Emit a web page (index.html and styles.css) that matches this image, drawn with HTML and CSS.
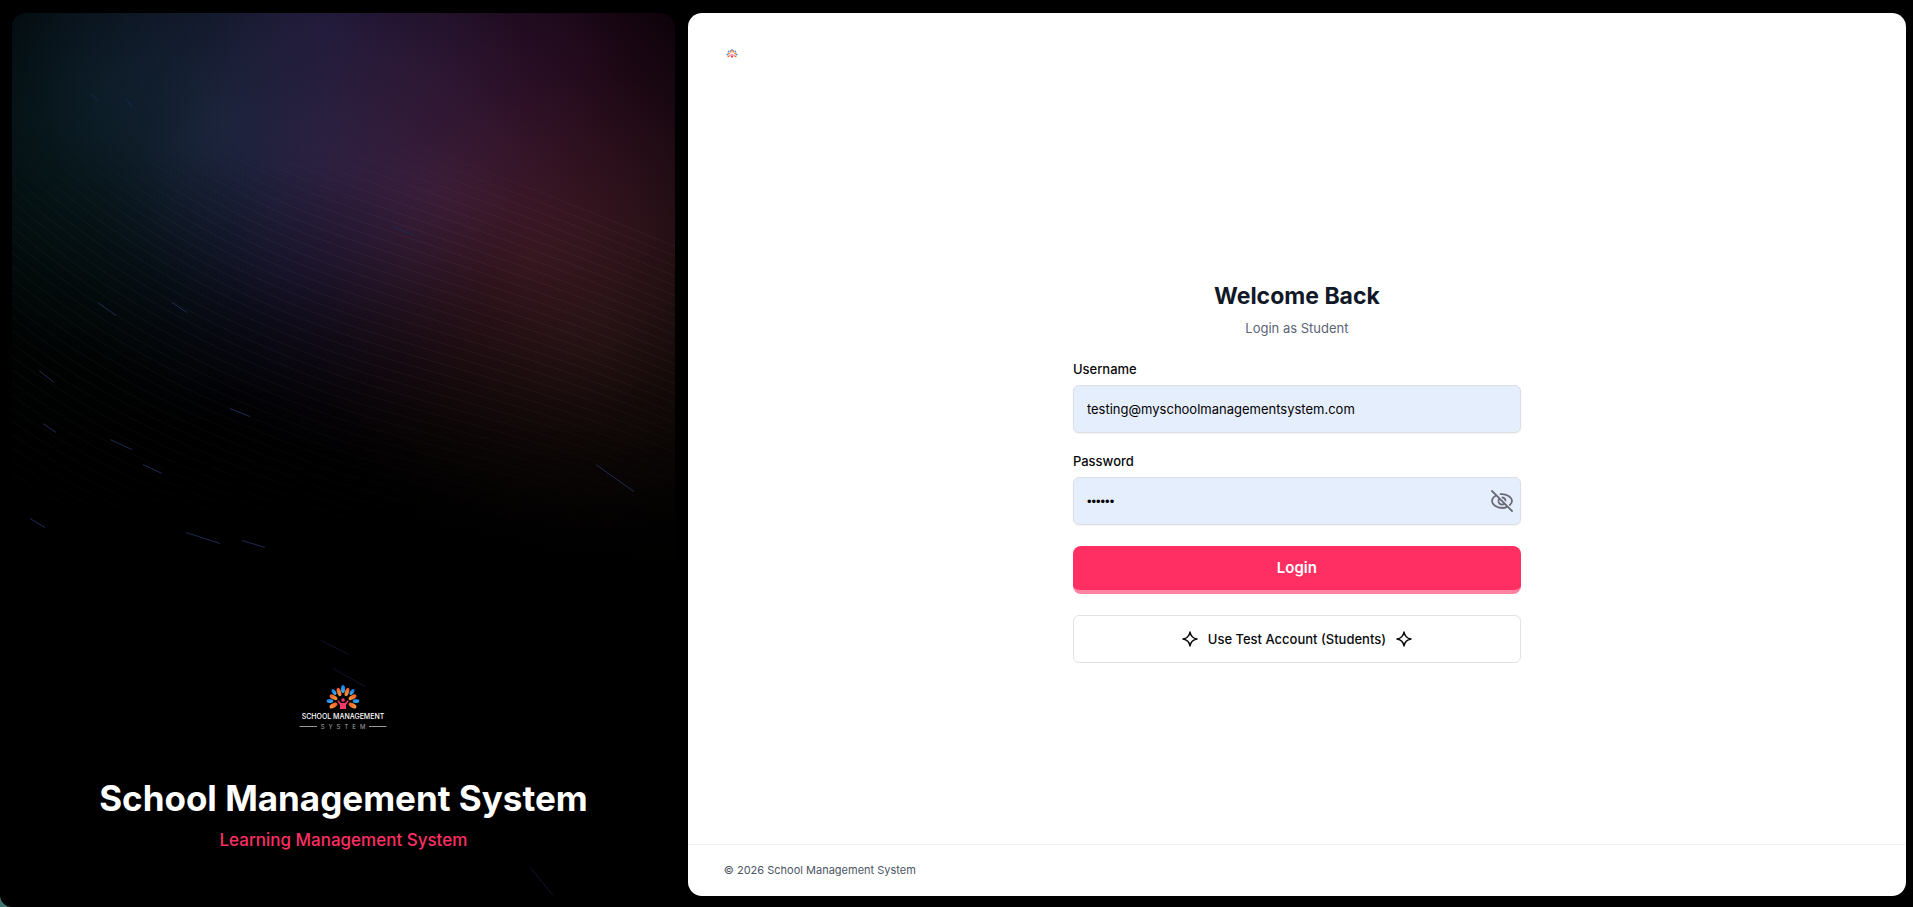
FILE: index.html
```html
<!DOCTYPE html>
<html lang="en">

<head>
    <meta charset="utf-8">
    <meta name="viewport" content="width=device-width, initial-scale=1">
    <title>School Management System</title>
    <link rel="stylesheet" href="styles.css">
</head>

<body>
    <div class="page">
        <aside class="hero">
            <svg class="hero-lines" viewBox="0 0 663 884" preserveAspectRatio="xMidYMid slice" aria-hidden="true">
                <defs>
                    <linearGradient id="fade" x1="0" y1="0" x2="0" y2="1">
                        <stop offset="0.12" stop-color="#000" />
                        <stop offset="0.24" stop-color="#fff" />
                        <stop offset="0.4" stop-color="#fff" />
                        <stop offset="0.62" stop-color="#000" />
                    </linearGradient>
                    <mask id="lines-mask" maskUnits="userSpaceOnUse" x="0" y="0" width="663" height="884">
                        <rect width="663" height="884" fill="url(#fade)" />
                    </mask>
                </defs>
                <g mask="url(#lines-mask)">
                    <g id="waves" class="waves"></g>
                </g>
                <g class="comets">
                    <path d="M80 82l7 7M114 87l7 8M381 214l22 9M86 290l18 13M160 290l15 10M27 358l15 12M218 396l20 8M31 411l13 9M98 427l22 10M131 452l19 9M584 452l38 27M18 506l15 9M174 520l34 11M230 528l23 7" />
                    <path class="dim" d="M309 628l28 14M321 656l32 18M519 856l22 27" />
                </g>
            </svg>
            <div class="brand">
                <svg class="brand-logo" viewBox="0 0 88 46" role="img" aria-label="School Management System">
                    <defs>
                        <linearGradient id="orange" x1="0" y1="0" x2="0" y2="1">
                            <stop offset="0" stop-color="#f15a29" />
                            <stop offset="1" stop-color="#fb9a3c" />
                        </linearGradient>
                        <linearGradient id="blue" x1="0" y1="0" x2="0" y2="1">
                            <stop offset="0" stop-color="#1479e8" />
                            <stop offset="1" stop-color="#45b4f5" />
                        </linearGradient>
                        <g id="tree">
                            <g fill="url(#blue)">
                                <ellipse cx="44" cy="4" rx="2" ry="4" />
                                <ellipse cx="35" cy="7" rx="1.800" ry="3.300" transform="rotate(-35 35 7)" />
                                <ellipse cx="53" cy="7" rx="1.800" ry="3.300" transform="rotate(35 53 7)" />
                                <ellipse cx="31" cy="16" rx="3.300" ry="1.900" />
                                <ellipse cx="57" cy="16" rx="3.300" ry="1.900" />
                            </g>
                            <g fill="url(#orange)">
                                <ellipse cx="40" cy="7" rx="2" ry="4.300" transform="rotate(-18 40 7)" />
                                <ellipse cx="48" cy="7" rx="2" ry="4.300" transform="rotate(18 48 7)" />
                                <ellipse cx="34.500" cy="12.300" rx="2.100" ry="4.300" transform="rotate(-60 34.500 12.300)" />
                                <ellipse cx="53.500" cy="12.300" rx="2.100" ry="4.300" transform="rotate(60 53.500 12.300)" />
                                <ellipse cx="34.500" cy="20.500" rx="2.200" ry="4.300" transform="rotate(60 34.500 20.500)" />
                                <ellipse cx="53.500" cy="20.500" rx="2.200" ry="4.300" transform="rotate(-60 53.500 20.500)" />
                            </g>
                            <g fill="#f2386b">
                                <circle cx="44" cy="15" r="1.800" />
                                <path d="M39 15l3 3h4l3-3 .6 1.200-2.600 3.800v4h-6v-4l-2.600-3.800z" />
                            </g>
                        </g>
                    </defs>
                    <use href="#tree" />
                    <text class="logo-name" x="44" y="34">SCHOOL MANAGEMENT</text>
                    <text class="logo-sub" x="46" y="44">SYSTEM</text>
                    <path class="logo-rule" d="M0.500 41.500h17.500M70 41.500h17.500" />
                </svg>
                <h1 class="brand-title">School Management System</h1>
                <p class="brand-tagline">Learning Management System</p>
            </div>
        </aside>

        <main class="panel">
            <header class="panel-header">
                <svg class="panel-logo" viewBox="27 0 34 25" aria-hidden="true">
                    <use href="#tree" />
                </svg>
            </header>

            <form class="login">
                <div class="login-heading">
                    <h2>Welcome Back</h2>
                    <p>Login as Student</p>
                </div>

                <div class="fields">
                    <div class="field">
                        <label for="username">Username</label>
                        <input id="username" type="text" value="testing@myschoolmanagementsystem.com">
                    </div>

                    <div class="field">
                        <label for="password">Password</label>
                        <div class="input-wrap">
                            <input id="password" type="password" value="123456">
                            <button class="toggle" type="button" aria-label="Show password">
                                <svg viewBox="0 0 24 24" aria-hidden="true">
                                    <path d="M2 2l20 20M10.500 5.200C16.500 4.400 22 8.500 22 12c0 1.400-.8 2.800-2.200 4M6 6.500C3.500 8 2 10.200 2 12c0 3.200 4.500 7 10 7 1.900 0 3.600-.4 5-1.100M9.500 9.500a3.500 3.500 0 0 0 5 5M12.500 8.500a3.500 3.500 0 0 1 3 3" />
                                </svg>
                            </button>
                        </div>
                    </div>
                </div>

                <button class="btn btn-primary" type="submit">Login</button>
                <button class="btn btn-outline" type="button">
                    <svg class="sparkle" viewBox="0 0 16 16" aria-hidden="true">
                        <path d="M8 1C8.600 4.800 10.200 7.200 15 8 10.200 8.800 8.600 11.200 8 15 7.400 11.200 5.800 8.800 1 8 5.800 7.200 7.400 4.800 8 1z" />
                    </svg>
                    Use Test Account (Students)
                    <svg class="sparkle" viewBox="0 0 16 16" aria-hidden="true">
                        <path d="M8 1C8.600 4.800 10.200 7.200 15 8 10.200 8.800 8.600 11.200 8 15 7.400 11.200 5.800 8.800 1 8 5.800 7.200 7.400 4.800 8 1z" />
                    </svg>
                </button>
            </form>

            <footer class="panel-footer">© 2026 School Management System</footer>
        </main>
    </div>
    <script>
        (function() {
            // waves sit closer together towards the right edge
            let out = "";
            for (let i = 0; i < 54; i++) {
                let left = -137 + i * 13;
                let mid = 94 + i * 10.8;
                let right = 234 + i * 9.8;
                out += `<path d="M0 ${left}C100 ${(left + mid) / 2} 200 ${mid - 38} 300 ${mid}S520 ${right - 60} 663 ${right}"/>`;
            }
            document.querySelector("#waves").innerHTML = out;
        })();
    </script>
</body>

</html>
```
FILE: styles.css
```css
* {
    box-sizing: border-box;
}

html {
    background-color: #3f7470;
}

body {
    margin: 0;
    font-family: Inter, "Liberation Sans", sans-serif;
    font-size: 13px;
    line-height: 20px;
    color: #09090b;
}

h1, h2, p {
    margin: 0;
}

.page {
    display: grid;
    grid-template-columns: 37fr 68fr;
    gap: 13px;
    min-height: 100vh;
    padding: 13px 7px 11px 12px;
    background-color: #000;
    border-bottom-left-radius: 12px;
}

.hero {
    position: relative;
    display: flex;
    flex-direction: column;
    justify-content: flex-end;
    overflow: hidden;
    border-radius: 14px;
    padding: 42px 32px;
    background:
        linear-gradient(190deg, transparent 22%, #0006 42%, #000 60%),
        radial-gradient(circle at 47% 2%, #120c24, transparent 32%),
        radial-gradient(circle at 32% 12%, #0b141b, transparent 34%),
        radial-gradient(circle at 12% 8%, #020b0f, transparent 28%),
        radial-gradient(circle at 4% 24%, #010a08, transparent 28%),
        radial-gradient(circle at 42% 30%, #08081a, transparent 28%),
        radial-gradient(circle at 64% 20%, #170916, transparent 36%),
        radial-gradient(circle at 78% 28%, #1f0a0c, transparent 36%),
        radial-gradient(circle at 88% 38%, #180f0a, transparent 34%),
        radial-gradient(circle at 86% 4%, #11030e, transparent 36%),
        #000;
    background-blend-mode: normal, screen, screen, screen, screen, screen, screen, screen, screen, screen, normal;
}

.hero-lines {
    position: absolute;
    inset: 0;
    width: 100%;
    height: 100%;
}

.waves path {
    fill: none;
    stroke: #fff;
    stroke-opacity: 0.05;
}

.comets path {
    fill: none;
    stroke: #1e2b52;
}

.comets .dim {
    stroke: #10142c;
}

.brand {
    position: relative;
    display: flex;
    flex-direction: column;
    align-items: center;
    text-align: center;
}

.brand-logo {
    width: 88px;
    height: 46px;
    margin-bottom: 47px;
}

.logo-name {
    font-size: 7px;
    font-weight: 500;
    text-anchor: middle;
    fill: #fff;
}

.logo-sub {
    font-size: 6px;
    letter-spacing: 4px;
    text-anchor: middle;
    fill: #aaa;
}

.logo-rule {
    stroke: #999;
}

.brand-title {
    font-size: 35px;
    line-height: 40px;
    font-weight: 700;
    color: #fff;
}

.brand-tagline {
    margin-top: 8px;
    font-size: 17px;
    line-height: 28px;
    font-weight: 500;
    color: #ff2e63;
}

.panel {
    display: flex;
    flex-direction: column;
    border-radius: 14px;
    background-color: #fff;
}

.panel-header {
    padding: 36px 38px;
    height: 86px;
}

.panel-logo {
    display: block;
    width: 12px;
    height: 9px;
}

.login {
    flex: 1;
    display: flex;
    flex-direction: column;
    justify-content: center;
    gap: 21px;
    width: 100%;
    max-width: 448px;
    margin: 0 auto;
}

.login-heading {
    text-align: center;
}

.login-heading h2 {
    font-size: 23px;
    line-height: 32px;
    font-weight: 700;
    color: #111827;
}

.login-heading p {
    margin-top: 6px;
    color: #5b6475;
}

.fields {
    display: flex;
    flex-direction: column;
    gap: 18px;
}

.field label {
    display: block;
    margin-bottom: 6px;
    font-weight: 500;
}

.field input {
    display: block;
    width: 100%;
    height: 48px;
    padding: 0 13px;
    border: 1px solid #dcdfe6;
    border-radius: 6px;
    background-color: #e5eefd;
    box-shadow: 0 1px 2px #0000000d;
    font: inherit;
    color: #000;
}

.field input[type="password"] {
    font-family: "Liberation Sans", sans-serif;
}

.input-wrap {
    position: relative;
}

.toggle {
    position: absolute;
    top: 12px;
    right: 7px;
    width: 24px;
    height: 24px;
    padding: 0;
    border: 0;
    background: none;
    cursor: pointer;
}

.toggle svg {
    display: block;
    fill: none;
    stroke: #6b6b76;
    stroke-width: 1.8;
    stroke-linecap: round;
}

.btn {
    display: flex;
    align-items: center;
    justify-content: center;
    gap: 10px;
    height: 48px;
    border-radius: 6px;
    font: inherit;
    font-weight: 500;
    cursor: pointer;
}

.btn-primary {
    border: 0;
    border-bottom: 4px solid #ff81a1;
    border-radius: 8px;
    background-color: #ff2e63;
    font-size: 15px;
    font-weight: 600;
    color: #fff;
}

.btn-outline {
    border: 1px solid #e2e2e5;
    background-color: #fff;
    color: #09090b;
}

.sparkle {
    width: 16px;
    height: 16px;
    fill: none;
    stroke: currentColor;
    stroke-width: 1.5;
    stroke-linejoin: round;
}

.panel-footer {
    padding: 15px 36px 16px;
    border-top: 1px solid #f1f1f3;
    font-size: 11px;
    color: #4b5563;
}
```
